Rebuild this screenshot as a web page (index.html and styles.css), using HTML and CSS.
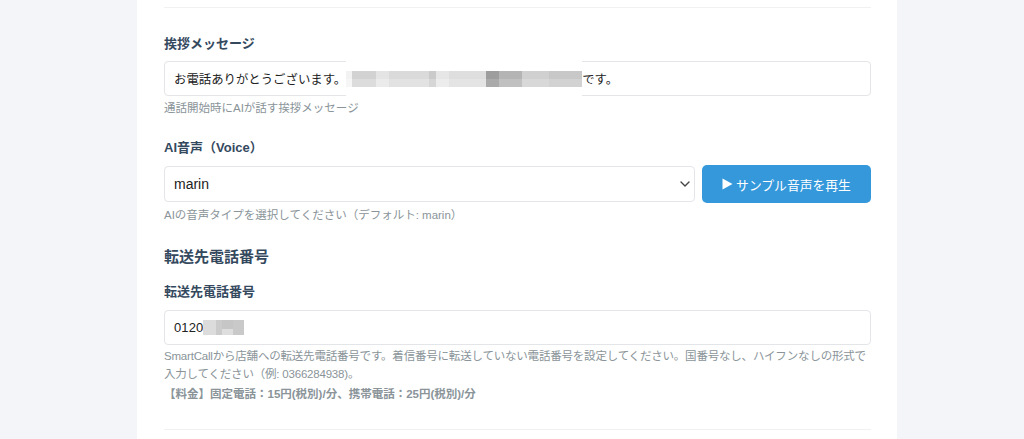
FILE: index.html
```html
<!DOCTYPE html>
<html lang="ja">
<head>
<meta charset="utf-8">
<title>設定</title>
<link rel="stylesheet" href="styles.css">
</head>
<body>
<div class="page">
  <div class="card">
    <div class="prev-section"></div>

    <div class="group first">
      <label class="label">挨拶メッセージ</label>
      <div class="field greeting">
        <span class="jp">お電話ありがとうございます。</span>
        <span class="blur">
          <span class="row">
            <i style="width:6px;background:#f2f2f2"></i><i style="width:24px;background:#d2d2d2"></i><i style="width:13px;background:#e4e4e4"></i><i style="width:40px;background:#dadada"></i><i style="width:7px;background:#cacaca"></i><i style="width:13px;background:#e6e6e6"></i><i style="width:37px;background:#dedede"></i><i style="width:13px;background:#9d9d9d"></i><i style="width:23px;background:#b4b4b4"></i><i style="width:27px;background:#d0d0d0"></i><i style="width:33px;background:#c8c8c8"></i>
          </span>
          <span class="row">
            <i style="width:6px;background:#f6f6f6"></i><i style="width:24px;background:#dcdcdc"></i><i style="width:13px;background:#ebebeb"></i><i style="width:40px;background:#e2e2e2"></i><i style="width:7px;background:#d6d6d6"></i><i style="width:13px;background:#ececec"></i><i style="width:37px;background:#e4e4e4"></i><i style="width:13px;background:#aaaaaa"></i><i style="width:23px;background:#c0c0c0"></i><i style="width:27px;background:#d8d8d8"></i><i style="width:33px;background:#d2d2d2"></i>
          </span>
        </span>
        <span class="jp">です。</span>
      </div>
      <p class="help">通話開始時にAIが話す挨拶メッセージ</p>
    </div>

    <div class="group">
      <label class="label">AI音声（Voice）</label>
      <div class="voice-row">
        <div class="select">
          <span class="select-value">marin</span>
          <svg class="chevron" width="10" height="6" viewBox="0 0 10 6"><path d="M1 1l4 4 4-4" fill="none" stroke="#444" stroke-width="1.4" stroke-linecap="round" stroke-linejoin="round"/></svg>
        </div>
        <button class="play-btn" type="button"><svg class="play-icon" width="11" height="12" viewBox="0 0 11 12"><path d="M0.5 0.5L10.5 6L0.5 11.5Z" fill="#fff"/></svg>サンプル音声を再生</button>
      </div>
      <p class="help">AIの音声タイプを選択してください（デフォルト: marin）</p>
    </div>

    <h3 class="section-title">転送先電話番号</h3>

    <div class="group tight">
      <label class="label">転送先電話番号</label>
      <div class="field phone">
        <span class="num">0120</span>
        <span class="blur-small">
          <i style="width:13px;background:#dcdcdc"></i><i style="width:6px;background:#cbcbcb"></i><span class="stack"><i style="height:9px;background:#c6c6c6"></i><i style="height:6px;background:#dedede"></i></span><i style="width:11px;background:#c9c9c9"></i>
        </span>
      </div>
      <p class="help long">SmartCallから店舗への転送先電話番号です。着信番号に転送していない電話番号を設定してください。国番号なし、ハイフンなしの形式で入力してください（例: 0366284938)。</p>
      <p class="help price">【料金】固定電話：15円(税別)/分、携帯電話：25円(税別)/分</p>
    </div>

    <div class="next-section"></div>
  </div>
</div>
</body>
</html>
```

FILE: styles.css
```css
* { box-sizing: border-box; }

html, body {
  margin: 0;
  padding: 0;
  height: 100%;
  overflow: hidden;
}

body {
  background: #f4f5f8;
  font-family: "Liberation Sans", "Noto Sans CJK JP", sans-serif;
  color: #2c3e50;
}

.page {
  padding-left: 137px;
  height: 100%;
}

.card {
  width: 760px;
  height: 100%;
  background: #fff;
  padding: 0 26px 0 27px;
}

.prev-section {
  height: 8px;
  border-bottom: 1px solid #f0f1f3;
}

.group {
  margin-top: 23px;
}

.group.first {
  margin-top: 27px;
}

.group.tight {
  margin-top: 15px;
}

.label {
  display: block;
  font-family: "Liberation Sans", "Noto Sans CJK JP", sans-serif;
  font-size: 13px;
  font-weight: 700;
  line-height: 18px;
  color: #34495e;
  margin-bottom: 8px;
}

.tight .label {
  margin-bottom: 9px;
}

.field {
  height: 35px;
  border: 1px solid #e3e5e8;
  border-radius: 4px;
  background: #fff;
  display: flex;
  align-items: center;
  padding: 0 9px;
  font-size: 13px;
  color: #222;
}

.greeting .jp {
  font-family: "Noto Sans CJK JP", sans-serif;
  font-size: 12.4px;
  white-space: nowrap;
}

.blur {
  align-self: stretch;
  margin: -1px 0;
  width: 236px;
  background: #fff;
  display: flex;
  flex-direction: column;
  justify-content: center;
}

.blur .row {
  display: flex;
  height: 8px;
}

.blur i, .blur-small i {
  display: block;
  height: 100%;
}

.phone .num {
  font-family: "Liberation Sans", sans-serif;
  font-size: 13px;
  letter-spacing: 0.1px;
}

.blur-small {
  display: flex;
  height: 15px;
  width: 41px;
}

.blur-small .stack {
  display: flex;
  flex-direction: column;
  width: 11px;
}

.blur-small .stack i {
  width: 100%;
}

.help {
  margin: 4px 0 0;
  font-family: "Liberation Sans", "Noto Sans CJK JP", sans-serif;
  font-size: 11.5px;
  line-height: 16px;
  color: #8a9499;
}

.help.long {
  margin-top: 2px;
  line-height: 18px;
  letter-spacing: -0.2px;
}

.help.price {
  margin-top: 2px;
  font-weight: 700;
  line-height: 18px;
}

.voice-row {
  display: flex;
  align-items: center;
  gap: 7px;
  height: 38px;
}

.select {
  flex: 1;
  height: 36px;
  border: 1px solid #e3e5e8;
  border-radius: 4px;
  display: flex;
  align-items: center;
  justify-content: space-between;
  padding: 0 4px 0 9px;
}

.select-value {
  font-family: "Liberation Sans", sans-serif;
  font-size: 14px;
  color: #222;
}

.chevron {
  display: block;
}

.play-btn {
  width: 169px;
  height: 38px;
  border: none;
  border-radius: 5px;
  background: #3498db;
  color: #fff;
  font-family: "Noto Sans CJK JP", sans-serif;
  font-size: 12.8px;
  display: flex;
  align-items: center;
  justify-content: center;
  gap: 3px;
  padding: 0;
  cursor: pointer;
}

.play-icon {
  display: block;
}

.section-title {
  margin: 23px 0 0;
  font-size: 15px;
  font-weight: 700;
  line-height: 22px;
  color: #34495e;
  font-family: "Liberation Sans", "Noto Sans CJK JP", sans-serif;
}

.next-section {
  margin-top: 26px;
  border-top: 1px solid #f0f1f3;
}
```
